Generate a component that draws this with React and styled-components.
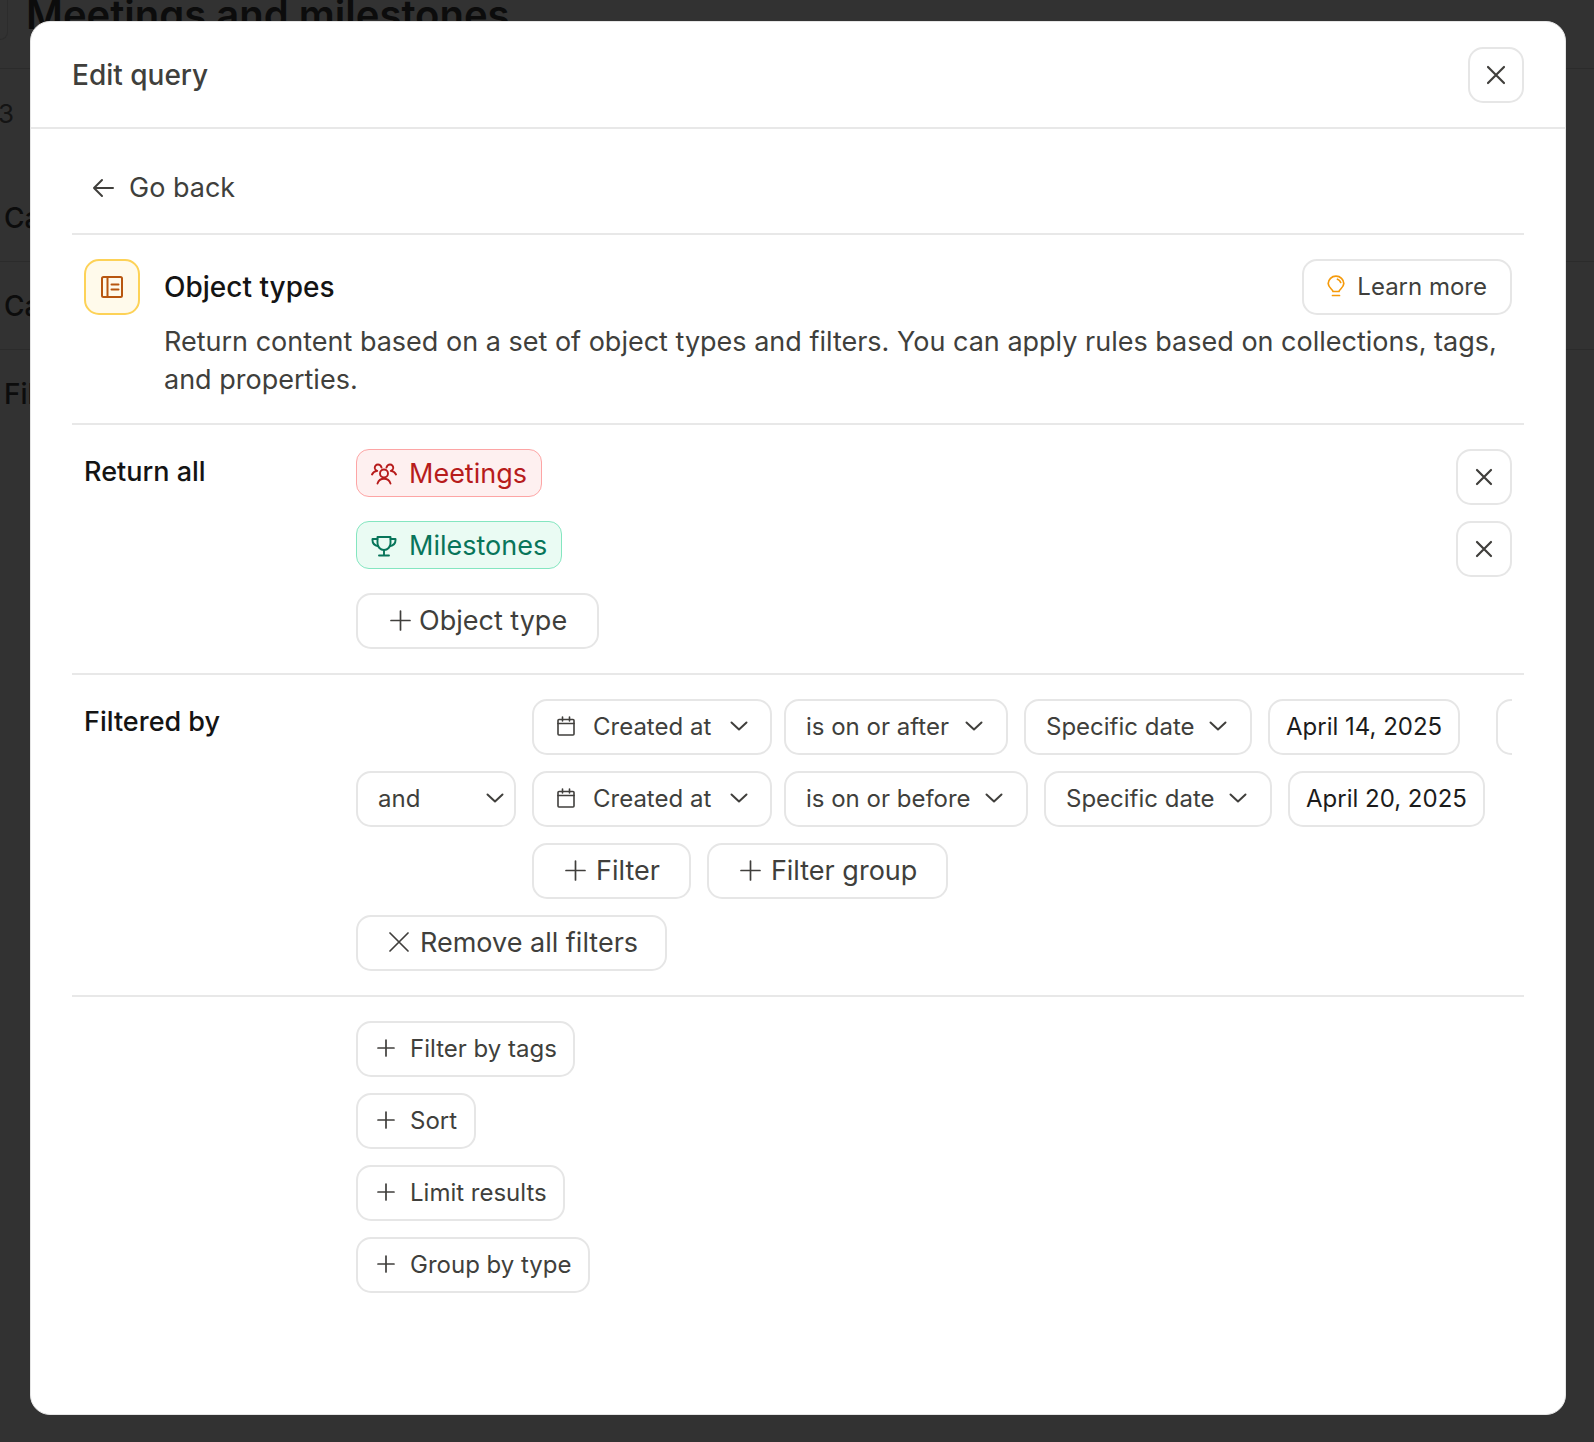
import React from 'react';
import styled, { createGlobalStyle } from 'styled-components';

const GlobalStyle = createGlobalStyle`
  html, body {
    margin: 0;
    padding: 0;
    background: #323232;
    font-family: 'Inter', 'Liberation Sans', sans-serif;
  }
  * { box-sizing: border-box; }
  svg { flex: none; }
`;

const Page = styled.div`
  position: relative;
  width: 1594px;
  height: 1442px;
  overflow: hidden;
  background: #323232;
  color: #0c0c0c;
`;

const PageTop = styled.div`
  display: flex;
  align-items: flex-start;
  gap: 26px;
  height: 69px;
  border-bottom: 1px solid #2b2b2b;
  overflow: hidden;
`;

const PageBackButton = styled.div`
  flex: none;
  width: 8px;
  height: 40px;
  border: 1px solid #2c2c2c;
  border-left: none;
  border-top: none;
  border-radius: 0 0 12px 0;
`;

const PageTitle = styled.h1`
  margin: -9px 0 0 -8px;
  font-size: 40px;
  line-height: 48px;
  font-weight: 600;
  white-space: nowrap;
`;

const PageCount = styled.div`
  font-size: 26px;
  line-height: 32px;
  margin: 29px 0 0 -2px;
  height: 76px;
  color: #141414;
`;

const PageRow = styled.div`
  height: 88px;
  padding-left: 4px;
  border-bottom: ${(p) => (p.$last ? 'none' : '1px solid #2b2b2b')};
  font-size: 28px;
  font-weight: 500;
  line-height: 88px;
  white-space: nowrap;
`;

const Modal = styled.div`
  position: absolute;
  top: 21px;
  left: 30px;
  width: 1536px;
  height: 1394px;
  background: #fff;
  border: 1px solid #e5e5e5;
  border-radius: 20px;
  overflow: hidden;
  color: #403f3c;
`;

const ModalHeader = styled.header`
  display: flex;
  align-items: center;
  justify-content: space-between;
  height: 107px;
  padding: 0 41px;
  border-bottom: 2px solid #e8e8e8;
`;

const ModalTitle = styled.h2`
  margin: 0;
  font-size: 28px;
  font-weight: 500;
`;

const ModalBody = styled.div`
  padding: 0 41px;
`;

const BackRow = styled.div`
  display: flex;
  align-items: center;
  gap: 15px;
  height: 106px;
  padding: 13px 0 0 20px;
  border-bottom: 2px solid #e8e8e8;
  font-size: 27px;
`;

const Section = styled.section`
  display: flex;
  padding: 24px 12px;
  border-bottom: ${(p) => (p.$last ? 'none' : '2px solid #e8e8e8')};
`;

const IntroIcon = styled.div`
  flex: none;
  display: flex;
  align-items: center;
  justify-content: center;
  width: 56px;
  height: 56px;
  margin-right: 24px;
  background: #fffaeb;
  border: 2px solid #fdd257;
  border-radius: 15px;
`;

const IntroText = styled.div`
  flex: 1;
  min-width: 0;
`;

const IntroHead = styled.div`
  display: flex;
  align-items: center;
  justify-content: space-between;
  height: 56px;
`;

const IntroTitle = styled.h3`
  margin: 0;
  font-size: 28px;
  font-weight: 500;
  color: #141414;
`;

const IntroCopy = styled.p`
  margin: 8px 0 0;
  font-size: 27px;
  line-height: 38px;
`;

const Label = styled.div`
  flex: none;
  width: 272px;
  padding-top: 6px;
  font-size: 27px;
  line-height: 34px;
  font-weight: 500;
  color: #141414;
`;

const Stack = styled.div`
  flex: 1;
  min-width: 0;
  display: flex;
  flex-direction: column;
  align-items: flex-start;
  gap: 16px;
`;

const TypeRow = styled.div`
  display: flex;
  align-items: flex-start;
  justify-content: space-between;
  width: 100%;
  height: 56px;
`;

const Chip = styled.div`
  display: inline-flex;
  align-items: center;
  gap: 12px;
  height: 48px;
  padding: 1px 14px 0;
  border: 1.5px solid ${(p) => (p.$tone === 'red' ? '#fda5a5' : '#84e6c0')};
  border-radius: 13px;
  background: ${(p) => (p.$tone === 'red' ? '#fef0f0' : '#eafbf3')};
  color: ${(p) => (p.$tone === 'red' ? '#b71c1c' : '#08755a')};
  font-size: 27px;
`;

const Button = styled.button`
  flex: none;
  display: inline-flex;
  align-items: center;
  justify-content: center;
  gap: ${(p) => p.$gap || 10}px;
  height: 56px;
  padding: 0 ${(p) => p.$pad ?? 28}px 2px ${(p) => p.$padLeft ?? p.$pad ?? 28}px;
  background: #fff;
  border: 2px solid #e6e6e6;
  border-radius: 15px;
  color: ${(p) => p.$color || '#403f3c'};
  font-family: inherit;
  font-size: ${(p) => p.$size || 24}px;
  white-space: nowrap;
`;

const IconButton = styled(Button)`
  width: 56px;
  padding: 0;
`;

const AddAction = styled(Button)`
  gap: 15px;
  padding: 0 16.5px 2px 19px;
`;

const FilterRows = styled.div`
  flex: 1;
  min-width: 0;
  display: flex;
  flex-direction: column;
  gap: 16px;
`;

const FilterRow = styled.div`
  display: flex;
  align-items: center;
  gap: 16px;
  height: 56px;
  overflow: hidden;
`;

const Conjunction = styled.div`
  flex: none;
  width: 160px;
`;

const FieldPair = styled.div`
  flex: none;
  display: flex;
  gap: 12px;
`;

const SelectButton = styled(Button)`
  width: ${(p) => p.$width}px;
  justify-content: space-between;
  padding: 0 ${(p) => p.$pad ?? 18}px 2px ${(p) => p.$padLeft ?? 20}px;
`;

const FieldName = styled.span`
  display: inline-flex;
  align-items: center;
  gap: 18px;
`;

const RemoveSpacer = styled.div`
  flex: none;
  margin-left: 20px;
`;

const Line = ({ w, children, sw = 2, color = 'currentColor', h }) => (
  <svg width={w} height={h || w} viewBox={`0 0 ${w} ${h || w}`} fill="none" stroke={color} strokeWidth={sw} strokeLinecap="round" strokeLinejoin="round">
    {children}
  </svg>
);

const ArrowBack = () => (
  <Line w={22}>
    <path d="M21 11H2M10 3l-8 8 8 8" />
  </Line>
);

const Cross = ({ w = 20, sw = 2.2, inset = 2 }) => (
  <Line w={w} sw={sw}>
    <path d={`M${inset} ${inset}L${w - inset} ${w - inset}M${w - inset} ${inset}L${inset} ${w - inset}`} />
  </Line>
);

const Plus = ({ w = 21, sw = 1.7 }) => (
  <Line w={w} sw={sw}>
    <path d={`M${w / 2} 1V${w - 1}M1 ${w / 2}H${w - 1}`} />
  </Line>
);

const Chevron = () => (
  <Line w={18} h={10} sw={2}>
    <path d="M1.5 1.5L9 8.5l7.5-7" />
  </Line>
);

const CalendarIcon = () => (
  <Line w={18} h={20} sw={1.6}>
    <rect x="1" y="3.5" width="16" height="15.5" rx="1" />
    <path d="M1 7.5H17M5.5 1V5M12.5 1V5" />
  </Line>
);

const BookIcon = () => (
  <Line w={24} sw={2} color="#b8560f">
    <rect x="2" y="2" width="20" height="20" rx="1.5" />
    <path d="M7.5 2V22M11.5 9.5H18.5M11.5 14.5H18.5" />
  </Line>
);

const BulbIcon = () => (
  <Line w={18} h={22} sw={1.7} color="#f59a0b">
    <path d="M6 16.5C6 14.5 1.2 12.8 1.2 8.6C1.2 4.4 4.7 1.2 9 1.2S16.8 4.4 16.8 8.6C16.8 12.8 12 14.5 12 16.5Z" />
    <path d="M10.5 4.2C12 4.8 13.2 6 13.7 7.5M5.5 20.5H12.5" />
  </Line>
);

const PeopleIcon = () => (
  <Line w={26} h={22} sw={1.9} color="#b71c1c">
    <circle cx="13" cy="10.5" r="4" />
    <path d="M6.5 20.5C7.5 17.5 10 15.8 13 15.8S18.5 17.5 19.5 20.5" />
    <path d="M10.5 4.6C9.9 2.6 8.6 1.5 7 1.5C5 1.5 3.6 3.2 3.8 5.2C4 6.7 5 7.6 6.2 7.9C3.8 8.2 1.9 9.5 1 11.5" />
    <path d="M15.5 4.6C16.1 2.6 17.4 1.5 19 1.5C21 1.5 22.4 3.2 22.2 5.2C22 6.7 21 7.6 19.8 7.9C22.2 8.2 24.1 9.5 25 11.5" />
  </Line>
);

const TrophyIcon = () => (
  <Line w={26} h={22} sw={1.9} color="#08755a">
    <path d="M6.5 2H19.5V8C19.5 12 16.7 15 13 15S6.5 12 6.5 8Z" />
    <path d="M6.5 4H1.5C1.2 7.5 3.2 10.5 7.2 11.2M19.5 4H24.5C24.8 7.5 22.8 10.5 18.8 11.2" />
    <path d="M13 15V20.5M8 20.5H18" />
  </Line>
);

const Field = ({ width }) => (
  <SelectButton $width={width} $pad={22} $padLeft={23}>
    <FieldName>
      <CalendarIcon />
      Created at
    </FieldName>
    <Chevron />
  </SelectButton>
);

const Select = ({ width, label }) => (
  <SelectButton $width={width} $pad={23}>
    {label}
    <Chevron />
  </SelectButton>
);

const PlainChoice = ({ label }) => (
  <Button $pad={16} $color="#1c1c1c">
    {label}
  </Button>
);

const AddButton = ({ label }) => (
  <AddAction>
    <Plus w={18} />
    {label}
  </AddAction>
);

export default function App() {
  return (
    <Page>
      <GlobalStyle />
      <PageTop>
        <PageBackButton />
        <PageTitle>Meetings and milestones</PageTitle>
      </PageTop>
      <PageCount>3</PageCount>
      <PageRow>Calendar</PageRow>
      <PageRow>Category</PageRow>
      <PageRow $last>Filter</PageRow>

      <Modal>
        <ModalHeader>
          <ModalTitle>Edit query</ModalTitle>
          <IconButton>
            <Cross />
          </IconButton>
        </ModalHeader>
        <ModalBody>
          <BackRow>
            <ArrowBack />
            Go back
          </BackRow>

          <Section>
            <IntroIcon>
              <BookIcon />
            </IntroIcon>
            <IntroText>
              <IntroHead>
                <IntroTitle>Object types</IntroTitle>
                <Button $pad={23} $gap={12}>
                  <BulbIcon />
                  Learn more
                </Button>
              </IntroHead>
              <IntroCopy>
                Return content based on a set of object types and filters. You can apply rules based on collections, tags, and properties.
              </IntroCopy>
            </IntroText>
          </Section>

          <Section>
            <Label>Return all</Label>
            <Stack>
              <TypeRow>
                <Chip $tone="red">
                  <PeopleIcon />
                  Meetings
                </Chip>
                <IconButton>
                  <Cross w={18} />
                </IconButton>
              </TypeRow>
              <TypeRow>
                <Chip $tone="green">
                  <TrophyIcon />
                  Milestones
                </Chip>
                <IconButton>
                  <Cross w={18} />
                </IconButton>
              </TypeRow>
              <Button $pad={30} $padLeft={32} $gap={8} $size={27}>
                <Plus />
                Object type
              </Button>
            </Stack>
          </Section>

          <Section>
            <Label>Filtered by</Label>
            <FilterRows>
              <FilterRow>
                <Conjunction />
                <FieldPair>
                  <Field width={240} />
                  <Select width={224} label="is on or after" />
                </FieldPair>
                <Select width={228} label="Specific date" />
                <PlainChoice label="April 14, 2025" />
                <RemoveSpacer>
                  <IconButton>
                    <Cross w={18} />
                  </IconButton>
                </RemoveSpacer>
              </FilterRow>
              <FilterRow>
                <SelectButton $width={160} $pad={10}>
                  and
                  <Chevron />
                </SelectButton>
                <FieldPair>
                  <Field width={240} />
                  <Select width={244} label="is on or before" />
                </FieldPair>
                <Select width={228} label="Specific date" />
                <PlainChoice label="April 20, 2025" />
                <RemoveSpacer>
                  <IconButton>
                    <Cross w={18} />
                  </IconButton>
                </RemoveSpacer>
              </FilterRow>
              <FilterRow>
                <Conjunction />
                <Button $pad={29} $padLeft={31} $size={27}>
                  <Plus />
                  Filter
                </Button>
                <Button $pad={29} $padLeft={31} $size={27}>
                  <Plus />
                  Filter group
                </Button>
              </FilterRow>
              <FilterRow>
                <Button $pad={27} $padLeft={31} $gap={11} $size={27}>
                  <Cross w={20} sw={1.7} inset={1} />
                  Remove all filters
                </Button>
              </FilterRow>
            </FilterRows>
          </Section>

          <Section $last>
            <Label />
            <Stack>
              <AddButton label="Filter by tags" />
              <AddButton label="Sort" />
              <AddButton label="Limit results" />
              <AddButton label="Group by type" />
            </Stack>
          </Section>
        </ModalBody>
      </Modal>
    </Page>
  );
}
